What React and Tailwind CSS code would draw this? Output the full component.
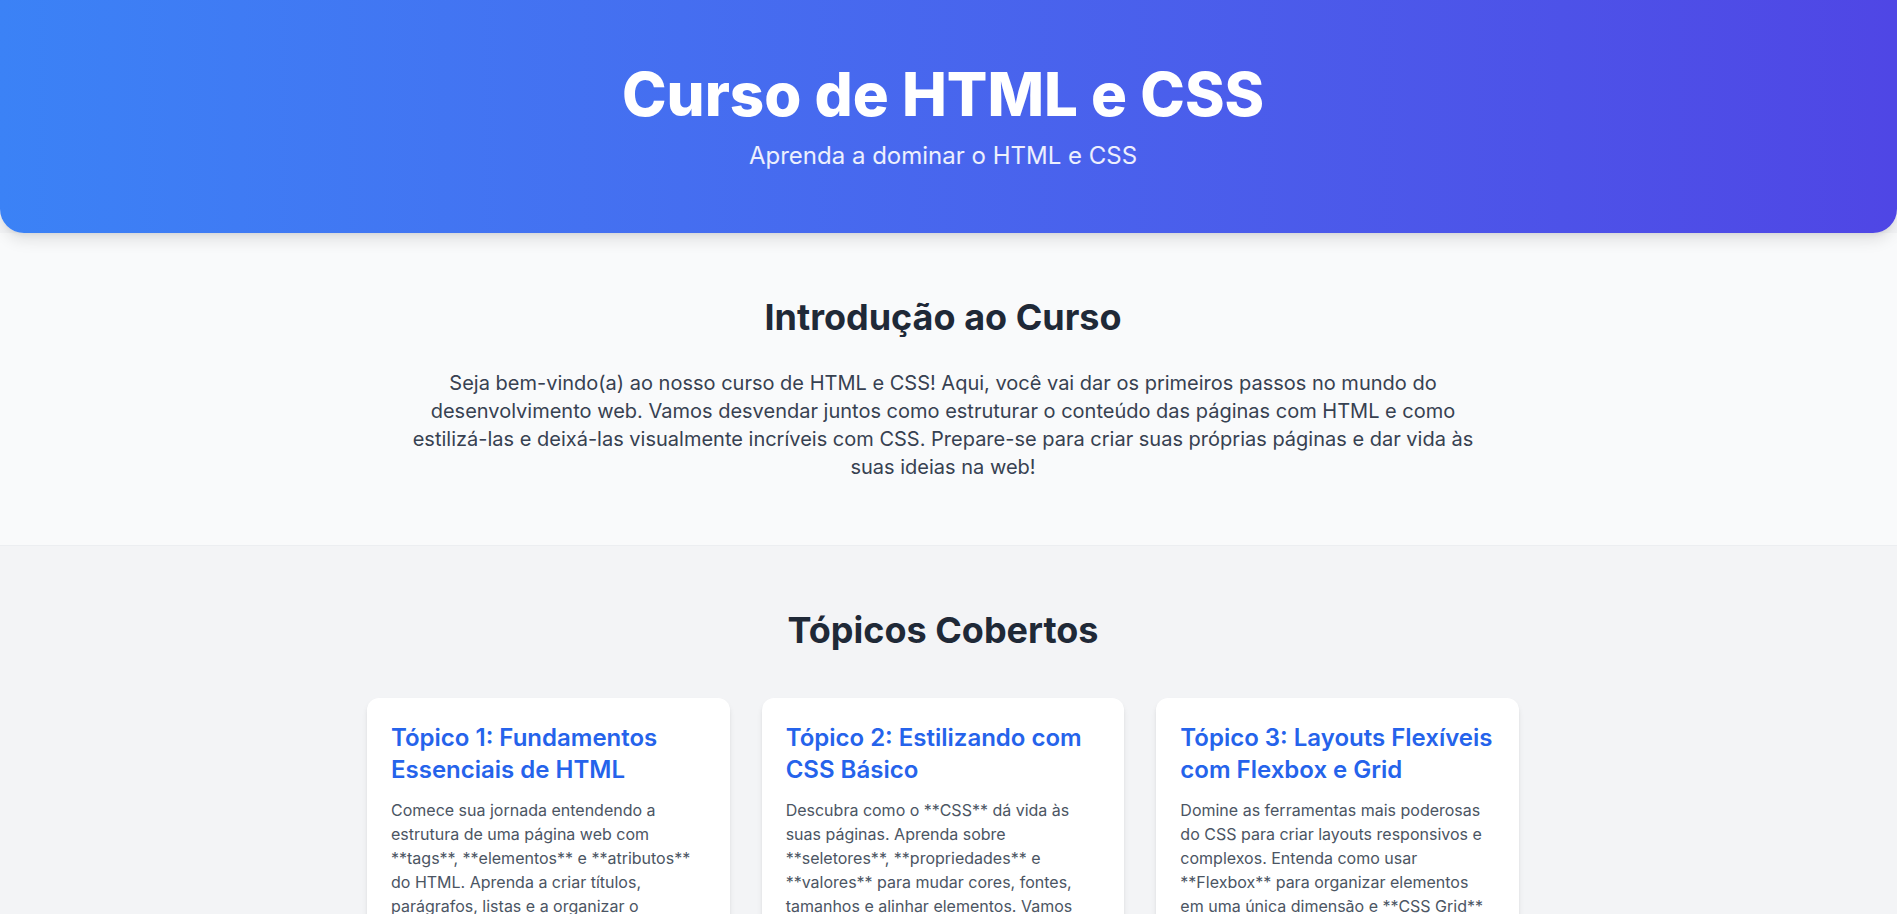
import React from "react";

const topics = [
  {
    title: "Tópico 1: Fundamentos Essenciais de HTML",
    text: "Comece sua jornada entendendo a estrutura de uma página web com **tags**, **elementos** e **atributos** do HTML. Aprenda a criar títulos, parágrafos, listas e a organizar o conteúdo de forma semântica e acessível.",
  },
  {
    title: "Tópico 2: Estilizando com CSS Básico",
    text: "Descubra como o **CSS** dá vida às suas páginas. Aprenda sobre **seletores**, **propriedades** e **valores** para mudar cores, fontes, tamanhos e alinhar elementos. Vamos explorar o modelo de caixa e muito mais.",
  },
  {
    title: "Tópico 3: Layouts Flexíveis com Flexbox e Grid",
    text: "Domine as ferramentas mais poderosas do CSS para criar layouts responsivos e complexos. Entenda como usar **Flexbox** para organizar elementos em uma única dimensão e **CSS Grid** para layouts bidimensionais.",
  },
];

export default function App() {
  return (
    <div className="min-h-screen bg-[#f3f4f6] font-['Inter','Noto_Sans',sans-serif]">
      <header className="bg-gradient-to-r from-[#3b82f6] to-[#4f46e5] text-white rounded-b-3xl shadow-lg pt-16 pb-[61px] text-center relative z-10">
        <div className="pr-[11px]">
          <h1 className="text-6xl font-extrabold leading-none">Curso de HTML e CSS</h1>
          <p className="mt-4 text-2xl text-white/90">Aprenda a dominar o HTML e CSS</p>
        </div>
      </header>

      <section className="bg-[#f9fafb] py-16 text-center border-b border-[#eceef1]">
        <div className="pr-[11px]">
          <div className="max-w-6xl mx-auto px-4">
            <h2 className="text-4xl font-bold text-[#1f2937] mb-8">Introdução ao Curso</h2>
            <p className="max-w-[1080px] mx-auto text-xl leading-7 text-[#374151]">
              Seja bem-vindo(a) ao nosso curso de HTML e CSS! Aqui, você vai dar os primeiros passos no mundo do desenvolvimento web. Vamos desvendar juntos como estruturar o conteúdo das páginas com HTML e como estilizá-las e deixá-las visualmente incríveis com CSS. Prepare-se para criar suas próprias páginas e dar vida às suas ideias na web!
            </p>
          </div>
        </div>
      </section>

      <section className="bg-[#f3f4f6] py-16">
        <div className="pr-[11px]">
          <div className="max-w-6xl mx-auto">
            <h2 className="text-4xl font-bold text-[#1f2937] text-center mb-12">Tópicos Cobertos</h2>
            <div className="grid grid-cols-3 gap-8">
              {topics.map((t) => (
                <div key={t.title} className="bg-white rounded-xl shadow-md p-6">
                  <h3 className="text-2xl font-semibold text-[#2563eb] mb-3">{t.title}</h3>
                  <p className="text-base text-[#4b5563]">{t.text}</p>
                </div>
              ))}
            </div>
          </div>
        </div>
      </section>
    </div>
  );
}
